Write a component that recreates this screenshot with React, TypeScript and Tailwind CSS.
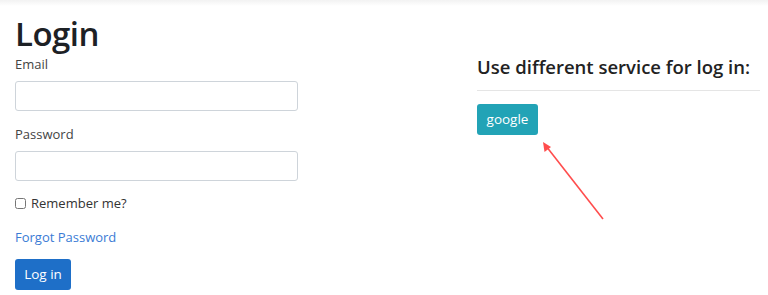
import React from 'react';

const App = () => {
  return (
    <div className="relative min-h-[295px] bg-white font-['Open_Sans',sans-serif] text-[#212529]">
      {/* top shadow strip */}
      <div className="h-[6px] bg-gradient-to-b from-[#f2f2f2] to-white" />

      <div className="flex pl-[15px] pr-[8px]">
        {/* Login form */}
        <div className="w-[283px] shrink-0">
          <h1 className="text-[33px] font-semibold leading-[40px] mt-[8px] tracking-[-0.5px] text-[#1d2125]">Login</h1>
          <div className="mt-[1px]">
            <label className="block text-[13px] leading-[18px] text-[#444]">Email</label>
            <input className="mt-[8px] block h-[30px] w-full rounded-[3px] border border-[#ced4da] px-3" />
          </div>
          <div className="mt-[14px]">
            <label className="block text-[13px] leading-[18px] text-[#444]">Password</label>
            <input
              type="password"
              className="mt-[8px] block h-[30px] w-full rounded-[3px] border border-[#ced4da] px-3"
            />
          </div>
          <label className="mt-[13px] flex items-center gap-[5px] text-[13px] leading-[18px] text-[#333]">
            <input type="checkbox" className="h-[11px] w-[11px] accent-gray-400" />
            Remember me?
          </label>
          <a href="#" className="mt-[16px] block text-[13px] leading-[18px] text-[#3a7bd5]">
            Forgot Password
          </a>
          <button className="mt-[13px] h-[31px] w-[56px] rounded-[3px] bg-[#1e6fc8] text-[13.5px] text-white">
            Log in
          </button>
        </div>

        {/* External services */}
        <div className="ml-[179px] flex-1 pt-[49px]">
          <h3 className="text-[18.5px] font-semibold leading-[24px] text-[#222]">Use different service for log in:</h3>
          <hr className="mt-[11px] border-t border-[#e5e5e5]" />
          <button className="mt-[13px] h-[31px] w-[61px] rounded-[3px] bg-[#22a3b6] text-[13.5px] text-white">
            google
          </button>
        </div>
      </div>

      {/* annotation arrow */}
      <svg className="pointer-events-none absolute left-0 top-0" width="768" height="295">
        <line x1="603" y1="219" x2="546" y2="146" stroke="#ff4d4d" strokeWidth="1.6" />
        <polygon points="543,142 544.5,152 551,147" fill="#ff4d4d" />
      </svg>
    </div>
  );
};

export default App;
